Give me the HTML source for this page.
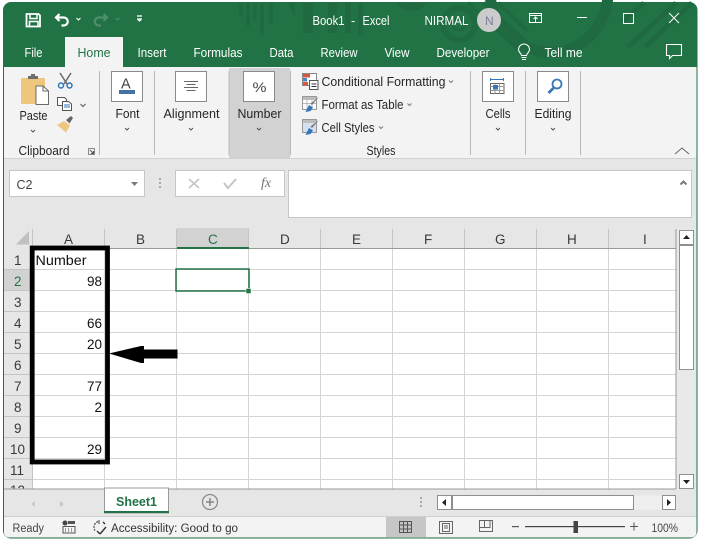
<!DOCTYPE html>
<html><head><meta charset="utf-8"><style>
html,body{margin:0;padding:0;background:#fff;width:701px;height:543px;overflow:hidden}
svg{display:block}
text{font-family:"Liberation Sans",sans-serif;font-size:12.5px;fill:#262626}
.h{fill:#3a3a3a;font-size:13.5px}
.n{font-size:13.5px;fill:#111}
</style></head><body>
<svg width="701" height="543" viewBox="0 0 701 543" xmlns="http://www.w3.org/2000/svg">
<rect width="701" height="543" fill="#fff"/>
<!-- window -->
<rect x="3" y="2" width="694.5" height="536.5" rx="8" fill="#217346"/>
<rect x="4" y="67" width="692.5" height="470.5" rx="5" fill="#e6e6e6"/>
<!-- title bar pattern -->
<g fill="#1f6a41">
<rect x="239" y="3" width="4" height="13"/><rect x="246" y="3" width="4" height="23"/><rect x="253" y="3" width="4" height="17"/><rect x="260" y="3" width="4" height="32"/><rect x="269" y="3" width="4" height="20"/>
<path d="M288 3h7v14zM303 3h10v30h-10zM328 3h9v30h-9zM345 3h6v30h-6zM358 3h5v32h-5z"/>
<path d="M396 3h30a16 12 0 0 1-30 0z"/>
</g>
<g fill="none" stroke="#1f6a41">
<circle cx="459" cy="24" r="16" stroke-width="6"/>
<circle cx="459" cy="24" r="6" stroke-width="3"/>
<path d="M490-5a62 62 0 0 0 78 55 62 62 0 0 0 40-55" stroke-width="11"/>
<path d="M468 3l50 46M483 3l42 38M498 3l30 28" stroke-width="4"/>
<path d="M628 47L676 3M645 47L692 3M622 22L644 3" stroke-width="5"/>
</g>
<!-- QAT -->
<g fill="none" stroke="#fff" stroke-width="1.8">
<path d="M26.500 14h12l1.500 1.500v11h-13.500z"/><path d="M30 14v4.500h7v-4.500" stroke-width="1.500"/><path d="M29.500 26.500v-5h8.500v5" stroke-width="1.500"/>
</g>
<g fill="none" stroke="#fff">
<path d="M59.500 14l-3.500 3.500 3.500 3.500" stroke-width="2.200"/><path d="M56.500 17.500h7a4 4 0 0 1 .5 8h-2.500" stroke-width="2.200"/>
<path d="M76.500 18l2 2 2-2" stroke-width="1.100"/>
<path d="M137 16h5" stroke-width="1.300"/><path d="M137 19h5M138 19.500l1.500 1.500 1.500-1.500" stroke-width="1.300"/>
</g>
<g fill="none" stroke="#4d8f6d"><path d="M103.500 14l3.500 3.500-3.500 3.500" stroke-width="2.200"/><path d="M106 17.500h-7a4 4 0 0 0-.5 8h2.500" stroke-width="2.200"/><path d="M115.500 18l2 2 2-2" stroke-width="1.100"/></g>
<text x="312.500" y="25" textLength="32" lengthAdjust="spacingAndGlyphs" style="fill:#fff">Book1</text>
<text x="351" y="25" style="fill:#fff">-</text>
<text x="362.500" y="25" textLength="27" lengthAdjust="spacingAndGlyphs" style="fill:#fff">Excel</text>
<text x="424.500" y="25" textLength="44" lengthAdjust="spacingAndGlyphs" style="fill:#fff">NIRMAL</text>
<circle cx="489" cy="20" r="12" fill="#cbcbcb"/>
<text x="485" y="25" style="fill:#7c7c9c;font-size:12px">N</text>
<!-- window controls -->
<g fill="none" stroke="#fff" stroke-width="1">
<rect x="529.500" y="13.500" width="12" height="9"/><path d="M529.500 15.500h12M535.500 22v-5M533.500 19l2-2 2 2"/>
<path d="M577 17.500h10"/><rect x="623.500" y="13.500" width="10" height="10"/>
<path d="M669 13l10 10M679 13l-10 10"/>
<path d="M666.500 44.500h15v11h-9l-3 3v-3h-3z" stroke-width="1.100"/>
<path d="M521.500 57.500h5M522 59.500h4"/>
<path d="M521.500 55.500c0-2-3-3-3-6a5.500 5.500 0 0 1 11 0c0 3-3 4-3 6z"/>
</g>
<!-- tabs -->
<rect x="65" y="37" width="58" height="31" fill="#f3f3f3"/>
<text x="24.500" y="57" textLength="18" lengthAdjust="spacingAndGlyphs" style="fill:#fff">File</text>
<text x="77.500" y="57" textLength="33" lengthAdjust="spacingAndGlyphs" style="fill:#217346">Home</text>
<text x="137.500" y="57" textLength="29" lengthAdjust="spacingAndGlyphs" style="fill:#fff">Insert</text>
<text x="193.500" y="57" textLength="49" lengthAdjust="spacingAndGlyphs" style="fill:#fff">Formulas</text>
<text x="269.500" y="57" textLength="24" lengthAdjust="spacingAndGlyphs" style="fill:#fff">Data</text>
<text x="320.500" y="57" textLength="37" lengthAdjust="spacingAndGlyphs" style="fill:#fff">Review</text>
<text x="384.500" y="57" textLength="25" lengthAdjust="spacingAndGlyphs" style="fill:#fff">View</text>
<text x="436.500" y="57" textLength="53" lengthAdjust="spacingAndGlyphs" style="fill:#fff">Developer</text>
<text x="544.500" y="57" textLength="38" lengthAdjust="spacingAndGlyphs" style="fill:#fff">Tell me</text>
<!-- ribbon -->
<rect x="4" y="67" width="692.500" height="91" fill="#f3f3f3"/>
<rect x="4" y="158" width="692.500" height="1" fill="#d2d2d2"/>
<rect x="229" y="68" width="61" height="90" fill="#d2d2d2"/>
<g fill="#b9b9b9">
<rect x="99" y="71" width="1" height="84"/><rect x="154" y="71" width="1" height="84"/><rect x="228.500" y="71" width="1" height="84"/><rect x="290" y="71" width="1" height="84"/><rect x="470" y="71" width="1" height="84"/><rect x="525" y="71" width="1" height="84"/><rect x="580" y="71" width="1" height="84"/>
</g>
<!-- clipboard icons -->
<rect x="21" y="78" width="24" height="26" rx="1.500" fill="#efc67e"/>
<path d="M28 78v-2h3v-2h4v2h3v3h-10z" fill="#6d6d6d"/>
<path d="M36 86h7l5.500 5v13.500h-12.500z" fill="#fff" stroke="#6a6a6a"/>
<path d="M43 86v5h5.500" fill="none" stroke="#6a6a6a"/>
<g fill="none" stroke="#6a6a6a" stroke-width="1.500"><path d="M60 73l7 11M71 73l-7 11"/></g>
<g fill="none" stroke="#2f76bb" stroke-width="1.500"><circle cx="61" cy="85.500" r="2.500"/><circle cx="69.500" cy="85.500" r="2.500"/></g>
<g fill="#fff" stroke="#555" stroke-width="1"><path d="M57.500 97.500h7l2 2v6h-9z"/><path d="M62.500 101.500h6l3 2.500v6.500h-9z"/></g>
<path d="M64 105h6M64 107h6" stroke="#2f76bb" stroke-width="1"/>
<path d="M80.500 104l2.500 2.500 2.500-2.500" fill="none" stroke="#555"/>
<path d="M57 125l7-4 6 4.500-4 7z" fill="#efc67e"/>
<path d="M66 120l5-4 2 2-3.500 5.500z" fill="#666"/>
<text x="19.500" y="120" textLength="28" lengthAdjust="spacingAndGlyphs">Paste</text>
<path d="M31 130l2 2 2-2" fill="none" stroke="#555"/>
<text x="18.500" y="155" textLength="51" lengthAdjust="spacingAndGlyphs">Clipboard</text>
<path d="M88.500 148.500h6v6h-6z" fill="none" stroke="#8a8a8a"/><path d="M90 150l3.500 3.500M93.500 151v2.500h-2.500" fill="none" stroke="#555"/>
<!-- group buttons -->
<g fill="#fff" stroke="#8a8a8a" stroke-width="1">
<rect x="111.500" y="71.500" width="31" height="30"/><rect x="175.500" y="71.500" width="31" height="30"/><rect x="243.500" y="71.500" width="31" height="30"/><rect x="482.500" y="71.500" width="31" height="30"/><rect x="537.500" y="71.500" width="31" height="30"/>
</g>
<rect x="119" y="90" width="16" height="4" fill="#4472a8"/>
<text x="121" y="88.500" style="font-size:14.500px;fill:#3f3f3f">A</text>
<path d="M184 81.500h14M186.500 84.500h9M184 87.500h14M186.500 90.500h9" stroke="#666" stroke-width="1"/>
<text x="252.500" y="92" textLength="14" lengthAdjust="spacingAndGlyphs" style="font-size:14px;fill:#444">%</text>
<!-- cells icon -->
<path d="M490.500 79.500h13M490.500 78v3M503.500 78v3" stroke="#2f76bb" fill="none"/>
<rect x="490.500" y="83.500" width="13.500" height="10" fill="#fff" stroke="#666"/>
<path d="M490.500 86.500h13.500M490.500 90.500h13.500M495 83.500v10M499.500 83.500v10" stroke="#999"/>
<rect x="493" y="85" width="5" height="4.500" fill="#2f76bb"/>
<!-- editing -->
<circle cx="557" cy="84" r="4.500" fill="#fff" stroke="#3a77b5" stroke-width="1.800"/>
<path d="M553.500 88l-5 5" stroke="#3a77b5" stroke-width="2.800"/>
<!-- styles icons -->
<rect x="302.500" y="73.500" width="14" height="12" fill="#fff" stroke="#888"/>
<rect x="303" y="74" width="7" height="3.500" fill="#d9573a"/><rect x="303" y="78" width="4" height="3.500" fill="#4b87c5"/><rect x="303" y="82" width="5" height="3.500" fill="#d9573a"/>
<rect x="309.500" y="80.500" width="8.500" height="9" fill="#fff" stroke="#555"/>
<path d="M311.500 84h5M311.500 86.500h5" stroke="#333"/>
<rect x="302.500" y="96.500" width="14" height="13" fill="#fff" stroke="#999"/><rect x="303" y="97" width="13" height="3" fill="#bcbcbc"/>
<path d="M307 97v12M312 97v12M303 103.500h13" stroke="#bbb"/>
<path d="M319 97l-7 8-1.500-1.500z" fill="#777"/><path d="M305.500 112l3.500-7 4 2.500-2.500 3.500z" fill="#2f76bb"/>
<rect x="302.500" y="119.500" width="14" height="13" fill="#d5e0ee" stroke="#999"/><rect x="303" y="120" width="13" height="3" fill="#bcbcbc"/>
<path d="M319 120l-7 8-1.500-1.500z" fill="#777"/><path d="M305.500 135l3.500-7 4 2.500-2.500 3.500z" fill="#2f76bb"/>
<text x="321.500" y="86" textLength="124" lengthAdjust="spacingAndGlyphs">Conditional Formatting</text>
<text x="321.500" y="109" textLength="82" lengthAdjust="spacingAndGlyphs">Format as Table</text>
<text x="321.500" y="132" textLength="53" lengthAdjust="spacingAndGlyphs">Cell Styles</text>
<g fill="none" stroke="#777"><path d="M449 80.500l2 2 2-2M407.500 103.500l2 2 2-2M379 126.500l2 2 2-2"/></g>
<text x="366.500" y="155" textLength="29" lengthAdjust="spacingAndGlyphs">Styles</text>
<text x="115.500" y="118" textLength="24" lengthAdjust="spacingAndGlyphs">Font</text>
<text x="163.500" y="118" textLength="56" lengthAdjust="spacingAndGlyphs">Alignment</text>
<text x="237.500" y="118" textLength="44" lengthAdjust="spacingAndGlyphs">Number</text>
<text x="485.500" y="118" textLength="25" lengthAdjust="spacingAndGlyphs">Cells</text>
<text x="534.500" y="118" textLength="37" lengthAdjust="spacingAndGlyphs">Editing</text>
<g fill="none" stroke="#555"><path d="M125 128l2 2 2-2M189 128l2 2 2-2M257 128l2 2 2-2M496 128l2 2 2-2M551 128l2 2 2-2"/></g>
<path d="M675 154l7-6 7 6" fill="none" stroke="#666"/>
<!-- formula bar -->
<rect x="9.500" y="170.500" width="135" height="26" fill="#fff" stroke="#c6c6c6"/>
<text x="16.500" y="189" textLength="16" lengthAdjust="spacingAndGlyphs" style="font-size:13px;fill:#444">C2</text>
<path d="M131 182h7l-3.500 4z" fill="#7a7a7a"/>
<g fill="#aaa"><rect x="159" y="178" width="2" height="2"/><rect x="159" y="182" width="2" height="2"/><rect x="159" y="186" width="2" height="2"/></g>
<rect x="175.500" y="170.500" width="109" height="26" fill="#fff" stroke="#c6c6c6"/>
<path d="M189 179l10 9M199 179l-10 9" stroke="#c4c4c4" stroke-width="1.600"/>
<path d="M224 183l4 5 8-9" fill="none" stroke="#c4c4c4" stroke-width="2"/>
<text x="261" y="187" style="font-family:'Liberation Serif',serif;font-style:italic;font-size:14px;fill:#777">fx</text>
<rect x="288.500" y="170.500" width="403" height="47" fill="#fff" stroke="#c6c6c6"/>
<path d="M680.500 184.500l3-3 3 3" fill="none" stroke="#777" stroke-width="2"/>
<!-- grid -->
<rect x="33" y="249" width="643" height="240" fill="#fff"/>
<rect x="4" y="228" width="672" height="21" fill="#e6e6e6"/>
<rect x="4" y="249" width="29" height="240" fill="#e6e6e6"/>
<rect x="177" y="228" width="72" height="20" fill="#d2d2d2"/>
<rect x="4" y="270" width="29" height="21" fill="#d2d2d2"/>
<path d="M29 244.500V231l-13 13.500z" fill="#c0c0c0"/>
<g stroke="#d4d4d4" fill="none">
<path d="M33 269.500h643M33 290.500h643M33 311.500h643M33 332.500h643M33 353.500h643M33 374.500h643M33 395.500h643M33 416.500h643M33 437.500h643M33 458.500h643M33 479.500h643"/>
<path d="M104.500 249v240M176.500 249v240M248.500 249v240M320.500 249v240M392.500 249v240M464.500 249v240M536.500 249v240M608.500 249v240"/>
</g>
<g stroke="#c4c4c4" fill="none">
<path d="M4 269.500h29M4 290.500h29M4 311.500h29M4 332.500h29M4 353.500h29M4 374.500h29M4 395.500h29M4 416.500h29M4 437.500h29M4 458.500h29M4 479.500h29"/>
<path d="M104.500 229v19M176.500 229v19M248.500 229v19M320.500 229v19M392.500 229v19M464.500 229v19M536.500 229v19M608.500 229v19"/>
<path d="M32.500 229v260"/>
</g>
<rect x="33" y="248" width="643" height="1" fill="#9a9a9a"/>
<rect x="177" y="247" width="72" height="2" fill="#217346"/>
<rect x="32" y="270" width="1" height="21" fill="#217346"/>
<rect x="675.500" y="229" width="1" height="260" fill="#9a9a9a"/>
<text class="h" x="64" y="244">A</text><text class="h" x="136" y="244">B</text><text class="h" x="208" y="244" style="fill:#217346">C</text><text class="h" x="280" y="244">D</text><text class="h" x="352" y="244">E</text><text class="h" x="424" y="244">F</text><text class="h" x="495" y="244">G</text><text class="h" x="567" y="244">H</text><text class="h" x="643" y="244">I</text>
<text class="h" x="14" y="265">1</text><text class="h" x="14" y="286" style="fill:#217346">2</text><text class="h" x="14" y="307">3</text><text class="h" x="14" y="328">4</text><text class="h" x="14" y="349">5</text><text class="h" x="14" y="370">6</text><text class="h" x="14" y="391">7</text><text class="h" x="14" y="412">8</text><text class="h" x="14" y="433">9</text><text class="h" x="10" y="454">10</text><text class="h" x="10" y="475">11</text><text class="h" x="10" y="495">12</text>
<text class="n" x="35.500" y="265" textLength="51" lengthAdjust="spacingAndGlyphs">Number</text>
<g text-anchor="end">
<text class="n" x="102" y="286">98</text><text class="n" x="102" y="328">66</text><text class="n" x="102" y="349">20</text><text class="n" x="102" y="391">77</text><text class="n" x="102" y="412">2</text><text class="n" x="102" y="454">29</text>
</g>
<!-- selection -->
<rect x="176" y="269" width="73" height="22" fill="none" stroke="#217346" stroke-width="1.500"/>
<rect x="246" y="288.500" width="5" height="5" fill="#217346" stroke="#fff" stroke-width=".5"/>
<!-- annotation -->
<rect x="32.200" y="248" width="75.300" height="214" fill="none" stroke="#000" stroke-width="4.800"/>
<path d="M109 353.500l32-7.500h3v3.500h33.500v9h-33.500v4.500h-3z" fill="#000"/>
<!-- tabs bar -->
<rect x="4" y="489" width="692.500" height="27.500" fill="#e6e6e6"/>
<rect x="4" y="488.500" width="672" height="1" fill="#9a9a9a"/>
<rect x="104.500" y="488" width="64" height="25" fill="#fff" stroke="#9a9a9a"/>
<rect x="104" y="511" width="65" height="2" fill="#217346"/>
<text x="116" y="506" textLength="41" lengthAdjust="spacingAndGlyphs" style="font-weight:bold;font-size:13px;fill:#217346">Sheet1</text>
<path d="M35 501l-4 3 4 3zM60 501l4 3-4 3z" fill="#c8c8c8"/>
<circle cx="210" cy="502" r="7.500" fill="none" stroke="#8c8c8c" stroke-width="1.300"/>
<path d="M206 502h8M210 498v8" stroke="#777" stroke-width="1.300"/>
<g fill="#aaa"><rect x="420" y="497" width="2" height="2"/><rect x="420" y="501" width="2" height="2"/><rect x="420" y="505" width="2" height="2"/></g>
<!-- h scroll -->
<rect x="437.500" y="495.500" width="238" height="14" fill="#efefef"/>
<rect x="437.500" y="495.500" width="14" height="14" fill="#fff" stroke="#8f8f8f"/>
<path d="M446 499v7l-4-3.500z" fill="#222"/>
<rect x="452.500" y="495.500" width="181" height="14" fill="#fff" stroke="#8f8f8f"/>
<rect x="662.500" y="495.500" width="13" height="14" fill="#fff" stroke="#8f8f8f"/>
<path d="M667 499v7l4-3.500z" fill="#222"/>
<!-- v scroll -->
<rect x="677" y="229" width="17.500" height="260" fill="#e9e9e9"/>
<rect x="679.500" y="230.500" width="14" height="14" fill="#fff" stroke="#8f8f8f"/>
<path d="M683 239h7l-3.500-4z" fill="#222"/>
<rect x="679.500" y="245.500" width="14" height="124" fill="#fff" stroke="#8f8f8f"/>
<rect x="679.500" y="474.500" width="14" height="14" fill="#fff" stroke="#8f8f8f"/>
<path d="M683 480h7l-3.500 4z" fill="#222"/>
<!-- status bar -->
<path d="M4 517h692.500v15a5 5 0 0 1-5 5H9a5 5 0 0 1-5-5z" fill="#f3f3f3"/>
<rect x="4" y="516" width="692.500" height="1" fill="#cfcfcf"/>
<text x="12.500" y="532" textLength="31.500" lengthAdjust="spacingAndGlyphs" style="font-size:11.500px;fill:#444">Ready</text>
<circle cx="65" cy="523" r="2.500" fill="#444"/>
<rect x="68" y="521" width="7" height="3" fill="#555"/>
<path d="M63 526.500h12v6.500h-12z" fill="none" stroke="#555"/>
<path d="M65 529h1M68 529h1M71 529h1M65 531h1M68 531h1M71 531h1" stroke="#444"/>
<path d="M98 521.500a6 6 0 0 0-3 9" fill="none" stroke="#444" stroke-dasharray="2 1" stroke-width="1.200"/>
<path d="M100 534l-3-3M100 534l6-7M103 522l2 2" fill="none" stroke="#333" stroke-width="1.400"/>
<path d="M99 520v4" stroke="#444"/>
<text x="111" y="532" textLength="127" lengthAdjust="spacingAndGlyphs" style="font-size:11.500px;fill:#333">Accessibility: Good to go</text>
<rect x="386" y="517" width="40" height="20" fill="#c6c6c6"/>
<g fill="none" stroke="#555"><rect x="399.500" y="521.500" width="12" height="11"/><path d="M399.500 525h12M399.500 529h12M403.500 521.500v11M407.500 521.500v11"/></g>
<g fill="none" stroke="#666"><rect x="439.500" y="521.500" width="13" height="12"/><rect x="442.500" y="523.500" width="7" height="8"/><path d="M444 526h4M444 528h4"/></g>
<g fill="none" stroke="#666"><path d="M479.500 520.500h13v11h-13zM479.500 527.500h10.500v-7M484.500 520.500v7"/></g>
<rect x="512" y="526" width="7" height="1.200" fill="#555"/>
<rect x="525" y="526" width="100" height="1.200" fill="#444"/>
<rect x="573.500" y="521" width="4.500" height="12" fill="#444"/>
<path d="M630 526.500h8M634 522.500v8" stroke="#555"/>
<text x="651.500" y="532" textLength="26.500" lengthAdjust="spacingAndGlyphs" style="font-size:11.500px;fill:#444">100%</text>
</svg>
</body></html>
